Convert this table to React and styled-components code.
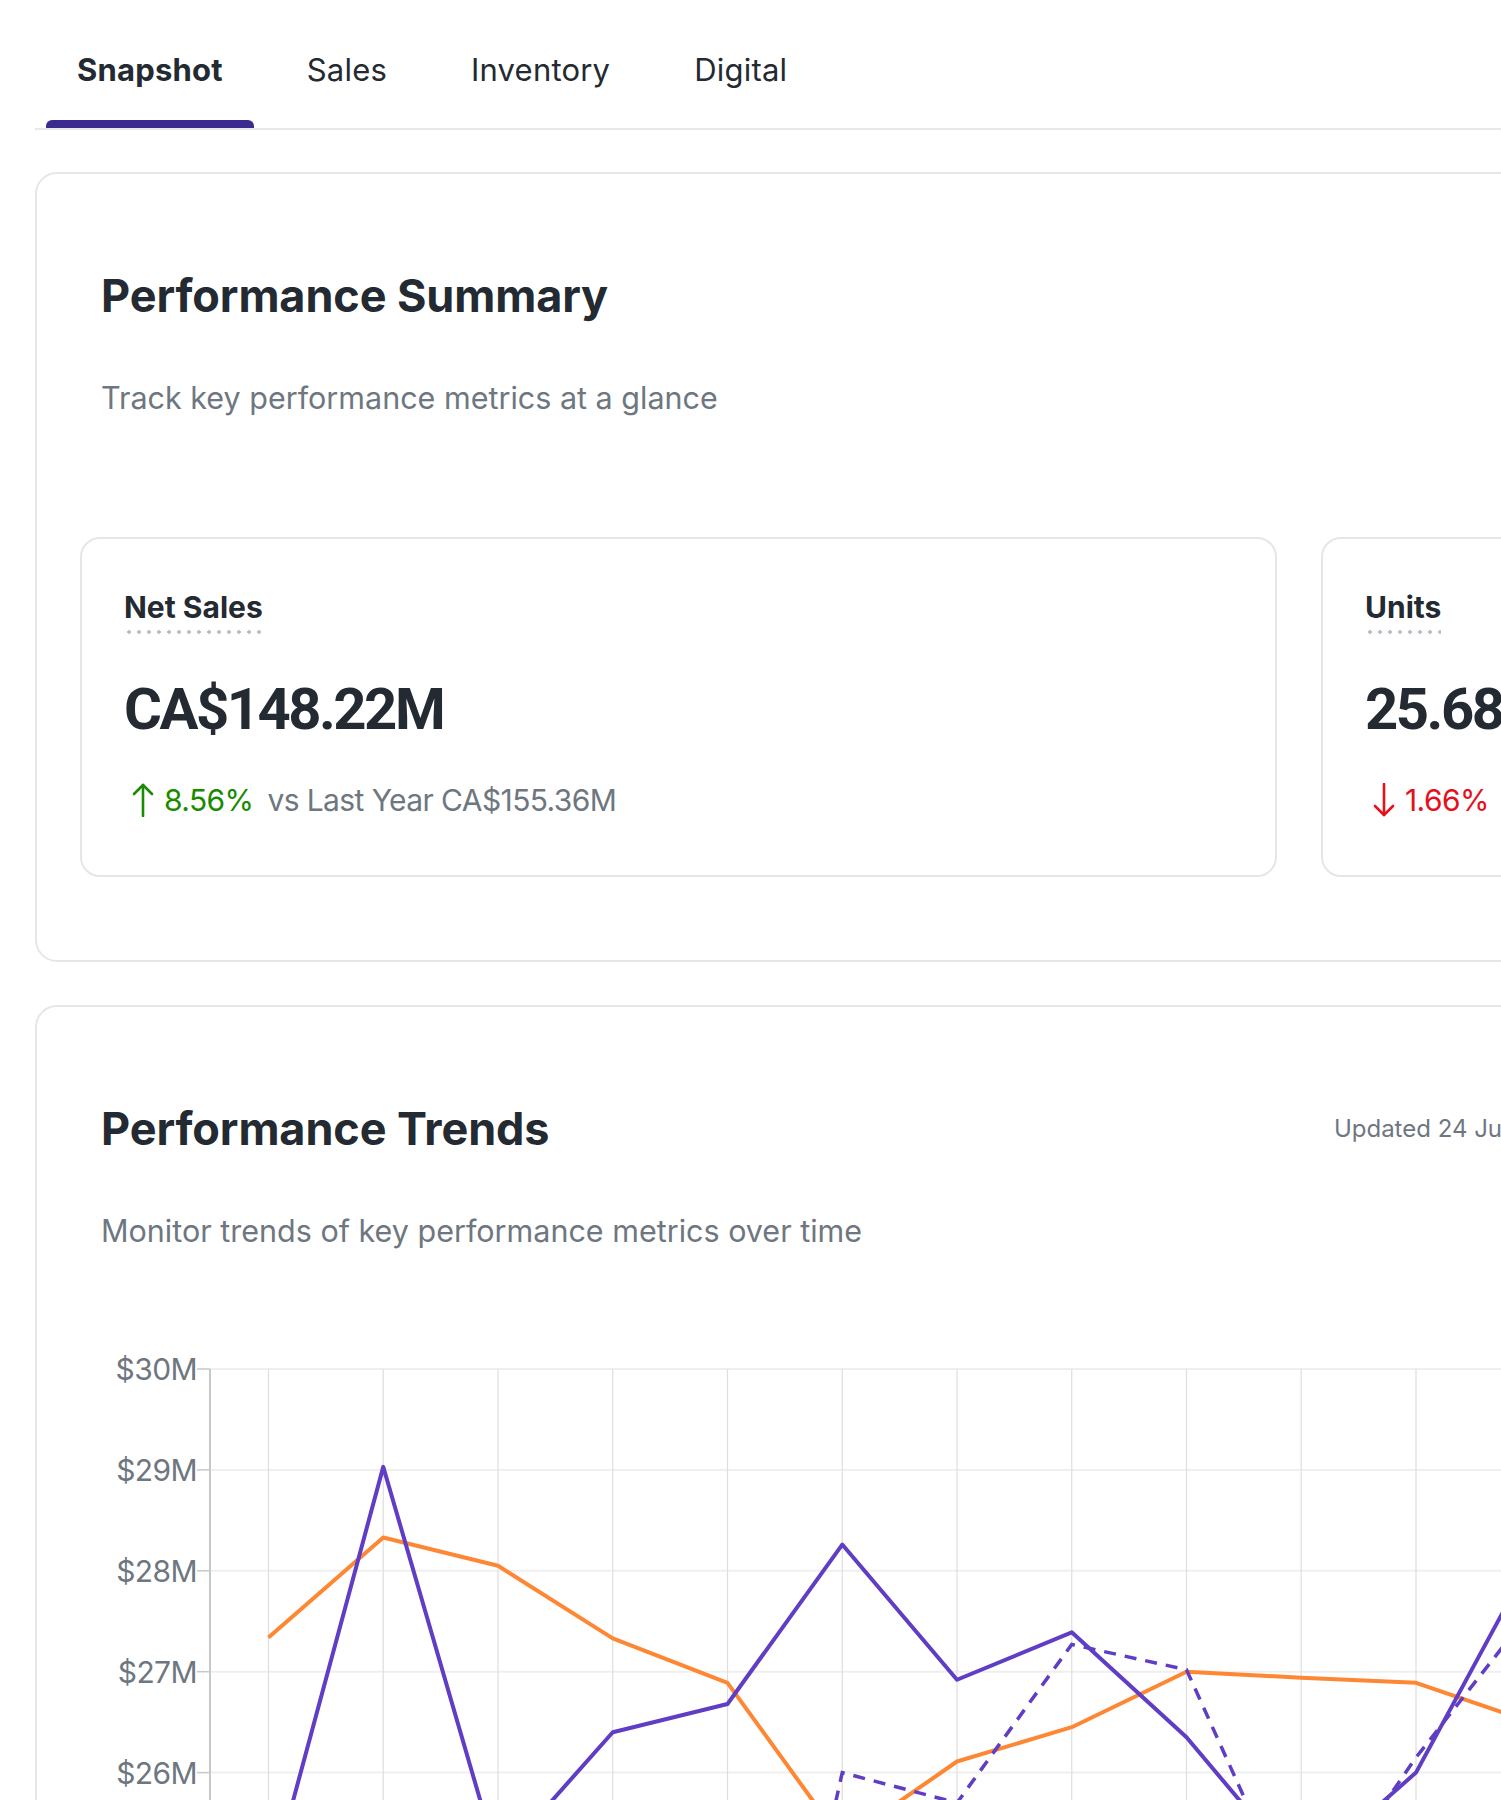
import React from 'react';
import styled, { createGlobalStyle } from 'styled-components';

const GlobalStyle = createGlobalStyle`
  html, body {
    margin: 0;
    padding: 0;
    background: #ffffff;
    overflow: hidden;
  }
  body {
    font-family: Inter, "Noto Sans", "Liberation Sans", sans-serif;
    color: #232a31;
  }
`;

const Page = styled.div`
  width: 1648px;
  padding: 0 0 60px 35px;
  box-sizing: border-box;
`;

const TabList = styled.div`
  display: flex;
  gap: 22px;
  padding-left: 11px;
  border-bottom: 2px solid #e6e8eb;
`;

const Tab = styled.div`
  position: relative;
  padding: 52px 31px 40px;
  font-size: 31px;
  line-height: 36px;
  font-weight: ${p => (p.$active ? 700 : 400)};
  color: #232a31;
  letter-spacing: 0.2px;

  &::after {
    content: '';
    display: ${p => (p.$active ? 'block' : 'none')};
    position: absolute;
    left: 0;
    right: 0;
    bottom: 0;
    height: 8px;
    border-radius: 6px 6px 0 0;
    background: #3d2a8f;
  }
`;

const Card = styled.section`
  margin-top: ${p => p.$gap}px;
  border: 2px solid #e6e6e6;
  border-radius: 22px;
  padding: 95px 43px 83px;
  overflow: hidden;
`;

const Header = styled.div`
  display: flex;
  justify-content: space-between;
  align-items: center;
  padding: 0 21px;
`;

const Title = styled.h2`
  margin: 0;
  font-size: 45px;
  line-height: 54px;
  font-weight: 700;
  letter-spacing: -0.1px;
  color: #232a31;
`;

const Updated = styled.div`
  font-size: 24px;
  line-height: 30px;
  color: #6e7780;
`;

const Subtitle = styled.p`
  margin: 55px 0 0;
  padding: 0 21px;
  font-size: 30.5px;
  line-height: 40px;
  color: #6e7780;
  letter-spacing: 0;
`;

const MetricRow = styled.div`
  display: flex;
  gap: 44px;
  margin-top: 119px;
`;

const MetricCard = styled.div`
  flex: 0 0 1197px;
  height: 340px;
  box-sizing: border-box;
  border: 2px solid #e6e6e6;
  border-radius: 20px;
  padding: 51px 42px 0;
`;

const Label = styled.div`
  display: inline-block;
  font-size: 30px;
  line-height: 34px;
  font-weight: 700;
  padding-bottom: 10px;
  background: radial-gradient(circle, #b9c0c7 1.6px, transparent 2.1px) repeat-x left bottom / 10px 4px;
`;

const Value = styled.div`
  margin-top: 40px;
  font-family: Roboto, Inter, sans-serif;
  font-size: 58px;
  line-height: 70px;
  font-weight: 700;
  letter-spacing: -2.5px;
`;

const Change = styled.div`
  display: flex;
  align-items: center;
  margin-top: 36px;
  margin-left: 8px;
  font-size: 30px;
  line-height: 40px;
  letter-spacing: -0.6px;
  white-space: nowrap;
`;

const Delta = styled.span`
  color: ${p => (p.$up ? '#1a8a00' : '#e5101c')};
  margin-left: 10px;
  margin-right: 14px;
`;

const Compare = styled.span`
  color: #6e7780;
`;

const ChartWrap = styled.div`
  margin-top: 78px;
  height: 1100px;
`;

const Arrow = ({ up }) => (
  <svg width="22" height="34" viewBox="0 0 22 34" fill="none"
    stroke={up ? '#1a8a00' : '#e5101c'} strokeWidth="2.6" strokeLinecap="round" strokeLinejoin="round">
    {up ? (
      <>
        <line x1="11" y1="33" x2="11" y2="2" />
        <polyline points="2,11 11,2 20,11" />
      </>
    ) : (
      <>
        <line x1="11" y1="1" x2="11" y2="32" />
        <polyline points="2,23 11,32 20,23" />
      </>
    )}
  </svg>
);

const metrics = [
  { label: 'Net Sales', value: 'CA$148.22M', delta: '8.56%', up: true, last: 'CA$155.36M' },
  { label: 'Units', value: '25.68M', delta: '1.66%', up: false, last: '26.11M' },
];

const purple = [24.82, 29.03, 25.12, 26.4, 26.68, 28.26, 26.92, 27.39, 26.35, 25.0, 26.0, 28.1];
const orange = [27.34, 28.33, 28.05, 27.33, 26.89, 25.32, 26.11, 26.45, 27.0, 26.94, 26.89, 26.5];
const dashed = [21.5, 22, 21.8, 21.2, 20.9, 26.0, 25.7, 27.27, 27.02, 24.5, 26.15, 27.6];

const TOP = 40;
const PER_M = 100.9;
const AXIS_X = 130;
const X0 = 188.5;
const STEP = 114.75;
const yOf = v => TOP + (30 - v) * PER_M;
const xOf = i => X0 + i * STEP;
const pts = arr => arr.map((v, i) => `${xOf(i)},${yOf(v)}`).join(' ');

const TrendChart = () => {
  const ticks = [30, 29, 28, 27, 26, 25, 24, 23, 22, 21, 20];
  const bottom = yOf(20);
  return (
    <svg width="1500" height="1100" viewBox="0 0 1500 1100">
      {ticks.map(t => (
        <g key={t}>
          <line x1={AXIS_X} x2="1500" y1={yOf(t)} y2={yOf(t)} stroke="#efefef" strokeWidth="2" />
          <line x1={AXIS_X - 13} x2={AXIS_X} y1={yOf(t)} y2={yOf(t)} stroke="#c8c8c8" strokeWidth="1.5" />
          <text x={AXIS_X - 13} y={yOf(t)} textAnchor="end" dominantBaseline="central"
            fontFamily="Inter, sans-serif" fontSize="30" fill="#6e7780" letterSpacing="-0.6">
            ${t}M
          </text>
        </g>
      ))}
      {purple.map((_, i) => (
        <line key={i} x1={xOf(i)} x2={xOf(i)} y1={TOP} y2={bottom} stroke="#dedede" strokeWidth="1.2" />
      ))}
      <line x1={AXIS_X} x2={AXIS_X} y1={TOP} y2={bottom} stroke="#c8c8c8" strokeWidth="2" />
      <polyline points={pts(orange)} fill="none" stroke="#fe8734" strokeWidth="4" strokeLinejoin="round" />
      <polyline points={pts(dashed)} fill="none" stroke="#5f3dc4" strokeWidth="3.5" strokeDasharray="12 9" />
      <polyline points={pts(purple)} fill="none" stroke="#5f3dc4" strokeWidth="4" strokeLinejoin="round" />
    </svg>
  );
};

export default function App() {
  return (
    <>
      <GlobalStyle />
      <Page>
        <TabList>
          <Tab $active>Snapshot</Tab>
          <Tab>Sales</Tab>
          <Tab>Inventory</Tab>
          <Tab>Digital</Tab>
        </TabList>

        <Card $gap={42}>
          <Header>
            <Title>Performance Summary</Title>
          </Header>
          <Subtitle>Track key performance metrics at a glance</Subtitle>
          <MetricRow>
            {metrics.map(m => (
              <MetricCard key={m.label}>
                <Label>{m.label}</Label>
                <Value>{m.value}</Value>
                <Change>
                  <Arrow up={m.up} />
                  <Delta $up={m.up}>{m.delta}</Delta>
                  <Compare>vs Last Year {m.last}</Compare>
                </Change>
              </MetricCard>
            ))}
          </MetricRow>
        </Card>

        <Card $gap={43}>
          <Header>
            <Title>Performance Trends</Title>
            <Updated>Updated 24 Jun 2025</Updated>
          </Header>
          <Subtitle>Monitor trends of key performance metrics over time</Subtitle>
          <ChartWrap>
            <TrendChart />
          </ChartWrap>
        </Card>
      </Page>
    </>
  );
}
